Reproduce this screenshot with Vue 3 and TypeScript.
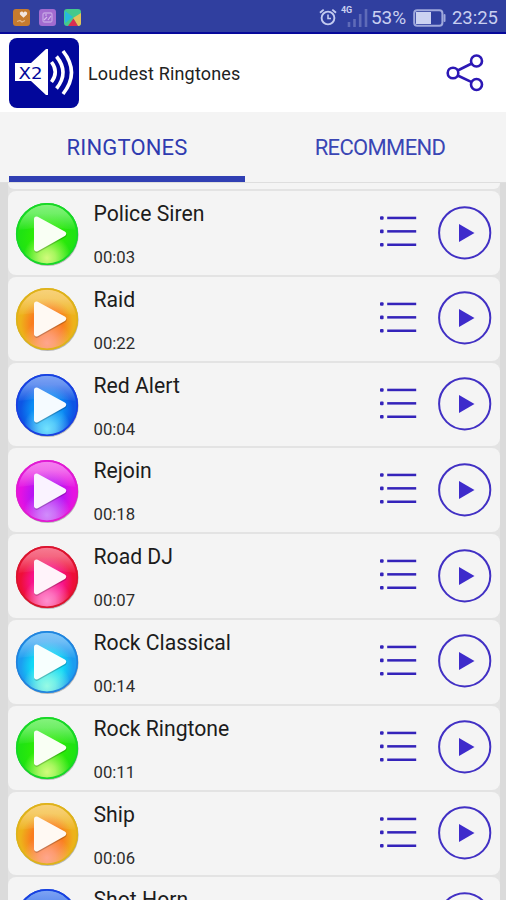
<script setup lang="ts">
import { ref } from 'vue'

interface Ringtone {
  name: string
  time: string
  tone: string
}

interface Tone {
  id: string
  rim: string
  body: string
  mid: string
  glow: string
  top: string
  arrow: string
}

const tones: Tone[] = [
  { id: 'green', rim: '#16d62a', body: '#1fe312', mid: '#2bea08', glow: '#d2fb7c', top: '#a6f7a0', arrow: '#f9fff4' },
  { id: 'orange', rim: '#dcb31c', body: '#edb21a', mid: '#fa7d1e', glow: '#ffa58c', top: '#fbdc9a', arrow: '#fff9f3' },
  { id: 'blue', rim: '#1b3fe0', body: '#0d55e4', mid: '#0a8cf4', glow: '#72e2fd', top: '#a4bdf8', arrow: '#f5fbff' },
  { id: 'purple', rim: '#e01cd0', body: '#e512e2', mid: '#b914f3', glow: '#d08cfb', top: '#f8a8f3', arrow: '#faf3ff' },
  { id: 'red', rim: '#d8162e', body: '#ee0f38', mid: '#f8128a', glow: '#ff8fce', top: '#f9a0b0', arrow: '#fff3fa' },
  { id: 'cyan', rim: '#2382dc', body: '#1c9df0', mid: '#10d8f6', glow: '#96fbe4', top: '#a5d3f9', arrow: '#f7fffe' },
]

const ringtones: Ringtone[] = [
  { name: 'Police Siren', time: '00:03', tone: 'green' },
  { name: 'Raid', time: '00:22', tone: 'orange' },
  { name: 'Red Alert', time: '00:04', tone: 'blue' },
  { name: 'Rejoin', time: '00:18', tone: 'purple' },
  { name: 'Road DJ', time: '00:07', tone: 'red' },
  { name: 'Rock Classical', time: '00:14', tone: 'cyan' },
  { name: 'Rock Ringtone', time: '00:11', tone: 'green' },
  { name: 'Ship', time: '00:06', tone: 'orange' },
  { name: 'Shot Horn', time: '', tone: 'blue' },
]

const toneOf = (id: string): Tone => tones.find((t) => t.id === id) ?? tones[0]

const activeTab = ref(0)
const tabs = ['RINGTONES', 'RECOMMEND']
</script>

<template>
  <div class="screen">
    <svg class="defs" width="0" height="0">
      <defs>
        <template v-for="t in tones" :key="t.id">
          <radialGradient :id="`body-${t.id}`" cx="0.5" cy="0.58" r="0.5">
            <stop offset="0" :stop-color="t.mid" />
            <stop offset="0.5" :stop-color="t.mid" />
            <stop offset="0.85" :stop-color="t.body" />
            <stop offset="1" :stop-color="t.body" />
          </radialGradient>
          <radialGradient :id="`glow-${t.id}`" cx="0.5" cy="0.9" r="0.4">
            <stop offset="0" :stop-color="t.glow" />
            <stop offset="0.35" :stop-color="t.glow" stop-opacity="0.75" />
            <stop offset="1" :stop-color="t.glow" stop-opacity="0" />
          </radialGradient>
          <linearGradient :id="`top-${t.id}`" x1="0" y1="0" x2="0" y2="1">
            <stop offset="0" :stop-color="t.top" stop-opacity="0.75" />
            <stop offset="0.35" :stop-color="t.top" stop-opacity="0.6" />
            <stop offset="1" :stop-color="t.top" stop-opacity="0.06" />
          </linearGradient>
        </template>
      </defs>
    </svg>

    <header class="status">
      <div class="notices">
        <svg class="notice" viewBox="0 0 17 17">
          <rect width="17" height="17" rx="3" fill="#c67b2f" />
          <path d="M10.500 8.800 7 5.400a1.900 1.900 0 0 1 3.500-1.700 1.900 1.900 0 0 1 3.500 1.700z" fill="#f3e6e0" />
          <path d="M4 12.500l3-1 2 1.500 3-1.500" fill="none" stroke="#e3b788" stroke-width="1.200" />
        </svg>
        <svg class="notice" viewBox="0 0 17 17">
          <rect width="17" height="17" rx="3" fill="#a26bd0" />
          <rect x="4" y="4" width="9" height="9" rx="1.500" fill="none" stroke="#c4a2e4" stroke-width="1.300" />
          <path d="M5 11l3-3m1 3 3-4M6 6h2" stroke="#d3b9eb" stroke-width="1.200" />
        </svg>
        <svg class="notice" viewBox="0 0 17 17">
          <rect width="17" height="17" rx="3" fill="#45c98c" />
          <path d="M1 2 9 8 1 14z" fill="#27b9dd" />
          <path d="M9 9l8-5v10a3 3 0 0 1-3 3z" fill="#e3c35a" />
          <path d="M4 17 9.500 9.500 14 17z" fill="#d92e52" />
        </svg>
      </div>
      <div class="system">
        <svg class="alarm" viewBox="0 0 18 18">
          <g fill="none" stroke="#c3cbf0" stroke-width="1.900">
            <circle cx="9" cy="10" r="6.400" />
            <path d="M1 4.800 4.700 1.600M17 4.800 13.300 1.600" />
            <path d="M9 6.500v4h3" stroke-width="1.600" />
          </g>
        </svg>
        <div class="cell">
          <span class="net">4G</span>
          <svg class="bars" viewBox="0 0 21 18">
            <path d="M2 13v5M7.500 10v8M13.200 5v13M19 0v18" stroke="#5f6bb8" stroke-width="2.600" />
          </svg>
        </div>
        <span class="percent">53%</span>
        <svg class="battery" viewBox="0 0 33 18">
          <rect x="1.200" y="1.200" width="28.200" height="15.600" rx="3" fill="none" stroke="#a0a9dc" stroke-width="2" />
          <rect x="3" y="3" width="15" height="12" fill="#ccd2f1" />
          <rect x="30.500" y="5" width="2" height="8" rx="1" fill="#a0a9dc" />
        </svg>
        <span class="clock">23:25</span>
      </div>
    </header>

    <div class="appbar">
      <svg class="logo" viewBox="0 0 70 70">
        <rect width="70" height="70" rx="8" fill="#02079b" />
        <path d="M6 25h16L37 11h2v46h-2L22 43H6z" fill="#fff" />
        <text x="9.500" y="40.500" class="logo-text" textLength="24" lengthAdjust="spacingAndGlyphs">X2</text>
        <g fill="none" stroke="#fff" stroke-width="3.600">
          <path d="M42.500 24q7.500 10 0 20" />
          <path d="M47.500 18.500q13 16 0 32" />
          <path d="M54 13q17 21.500 0 43" />
        </g>
      </svg>
      <span class="title">Loudest Ringtones</span>
      <svg class="share" viewBox="0 0 38 38">
        <g fill="none" stroke="#2c18b5" stroke-width="2.600">
          <circle cx="7" cy="19" r="5.300" />
          <circle cx="30.500" cy="7" r="5.500" />
          <circle cx="30.500" cy="30.500" r="5.500" />
          <path d="M11.700 16.500 25.700 9.500M11.700 21.500l14 6.700" />
        </g>
      </svg>
    </div>

    <nav class="tabs">
      <button
        v-for="(tab, i) in tabs"
        :key="tab"
        class="tab"
        :class="{ active: i === activeTab }"
        @click="activeTab = i"
      >
        <span>{{ tab }}</span>
      </button>
    </nav>

    <main class="list">
      <div class="card previous"></div>
      <article v-for="r in ringtones" :key="r.name" class="card">
        <svg class="orb" viewBox="0 0 66 66">
          <circle cx="33.600" cy="34" r="31" fill="#000" opacity="0.25" />
          <circle cx="33" cy="33" r="31" :fill="`url(#body-${r.tone})`" />
          <circle cx="33" cy="33" r="30" :fill="`url(#glow-${r.tone})`" />
          <path d="M4.500 29a28.700 28.700 0 0 1 57 0Q33 24 4.500 29z" :fill="`url(#top-${r.tone})`" />
          <circle cx="33" cy="33" r="30.300" fill="none" :stroke="toneOf(r.tone).rim" stroke-width="1.600" />
          <path d="M22.800 19 50 34 22.800 49.300z" fill="#000" stroke="#000" stroke-width="5" stroke-linejoin="round" opacity="0.2" />
          <path
            d="M22.500 18 49.600 32.700 22.500 48z"
            :fill="toneOf(r.tone).arrow"
            :stroke="toneOf(r.tone).arrow"
            stroke-width="5"
            stroke-linejoin="round"
          />
        </svg>
        <div class="info">
          <span class="name">{{ r.name }}</span>
          <span v-if="r.time" class="time">{{ r.time }}</span>
        </div>
        <svg class="menu" viewBox="0 0 38 34">
          <g fill="#3423ba">
            <rect x="0" y="1.200" width="3.600" height="3.600" rx="1" />
            <rect x="0" y="14.600" width="3.600" height="3.600" rx="1" />
            <rect x="0" y="28" width="3.600" height="3.600" rx="1" />
            <rect x="7.200" y="1.700" width="29" height="2.500" />
            <rect x="7.200" y="15.100" width="29" height="2.500" />
            <rect x="7.200" y="28.500" width="29" height="2.500" />
          </g>
        </svg>
        <svg class="play" viewBox="0 0 54 54">
          <circle cx="26.700" cy="26.800" r="25.600" fill="none" stroke="#4130c4" stroke-width="2" />
          <path d="M21 18v18L36.500 27z" fill="#3e2bcb" />
        </svg>
      </article>
    </main>
  </div>
</template>

<style>
body {
  margin: 0;
  overflow: hidden;
}
</style>

<style scoped>
.screen {
  width: 506px;
  height: 900px;
  overflow: hidden;
  display: flex;
  flex-direction: column;
  background: #dbdbdb;
  font-family: Roboto, "Liberation Sans", sans-serif;
}
.defs {
  position: absolute;
}
.status {
  flex: none;
  box-sizing: border-box;
  height: 34px;
  padding: 1px 8px 0 13px;
  display: flex;
  align-items: center;
  justify-content: space-between;
  background: #303f9f;
  border-bottom: 2px solid #06089a;
  color: #c9cff0;
}
.notices {
  display: flex;
  gap: 8.500px;
  padding-top: 2px;
}
.notice {
  width: 17px;
  height: 17px;
}
.system {
  display: flex;
  align-items: center;
  padding-top: 3px;
}
.alarm {
  width: 18px;
  height: 18px;
  margin: -2px 4px 0 0;
}
.cell {
  display: flex;
  width: 30px;
}
.net {
  width: 6px;
  margin-top: -4px;
  font-size: 9px;
  line-height: 10px;
  font-weight: 700;
}
.bars {
  width: 21px;
  height: 18px;
}
.percent {
  width: 42px;
  font-size: 19px;
  line-height: 20px;
}
.battery {
  width: 33px;
  height: 18px;
}
.clock {
  margin-left: 6px;
  font-size: 18.500px;
  line-height: 20px;
}
.appbar {
  flex: none;
  box-sizing: border-box;
  height: 78px;
  padding: 0 22px 0 9px;
  display: flex;
  align-items: center;
  background: #fff;
}
.logo {
  width: 70px;
  height: 70px;
}
.logo-text {
  font-family: "DejaVu Sans", sans-serif;
  font-size: 16.500px;
  fill: #02079b;
}
.title {
  flex: 1;
  margin-left: 9px;
  padding-top: 2px;
  font-size: 18px;
  line-height: 22px;
  letter-spacing: 0.18px;
  color: #222;
}
.share {
  width: 38px;
  height: 38px;
}
.tabs {
  flex: none;
  box-sizing: border-box;
  height: 71px;
  padding: 0 8px 0 9px;
  display: grid;
  grid-template-columns: 236px 236px;
  gap: 17px;
  background: #f4f4f4;
  border-bottom: 1px solid #dedede;
}
.tab {
  height: 70px;
  padding: 8px 0 0;
  border: 0;
  border-bottom: 6px solid transparent;
  background: none;
  font: 22px/26px Roboto, "Liberation Sans", sans-serif;
  letter-spacing: -0.650px;
  color: #3a46b4;
}
.tab.active {
  border-bottom-color: #303fb3;
  letter-spacing: 0.150px;
  color: #2f3bb0;
}
.list {
  margin: 0 6px 0 8px;
  display: flex;
  flex-direction: column;
  gap: 2px;
  background: #e3e3e3;
}
.card {
  flex: none;
  box-sizing: border-box;
  height: 83.800px;
  padding: 0 8px 0 6px;
  display: flex;
  align-items: flex-start;
  background: #f4f4f4;
  border-radius: 8px;
}
.card.previous {
  height: 6px;
  border-radius: 0 0 8px 8px;
}
.orb {
  width: 66px;
  height: 66px;
  margin-top: 9.500px;
}
.info {
  flex: 1;
  display: flex;
  flex-direction: column;
  padding: 11px 0 0 13.500px;
  gap: 22px;
}
.name {
  font-size: 21.200px;
  line-height: 24px;
  color: #1c1c1c;
}
.time {
  font-size: 16.700px;
  line-height: 20px;
  color: #2c2c2c;
}
.menu {
  width: 38px;
  height: 34px;
  margin: 24px 20.500px 0 0;
}
.play {
  width: 54px;
  height: 54px;
  margin-top: 14.500px;
}
</style>
